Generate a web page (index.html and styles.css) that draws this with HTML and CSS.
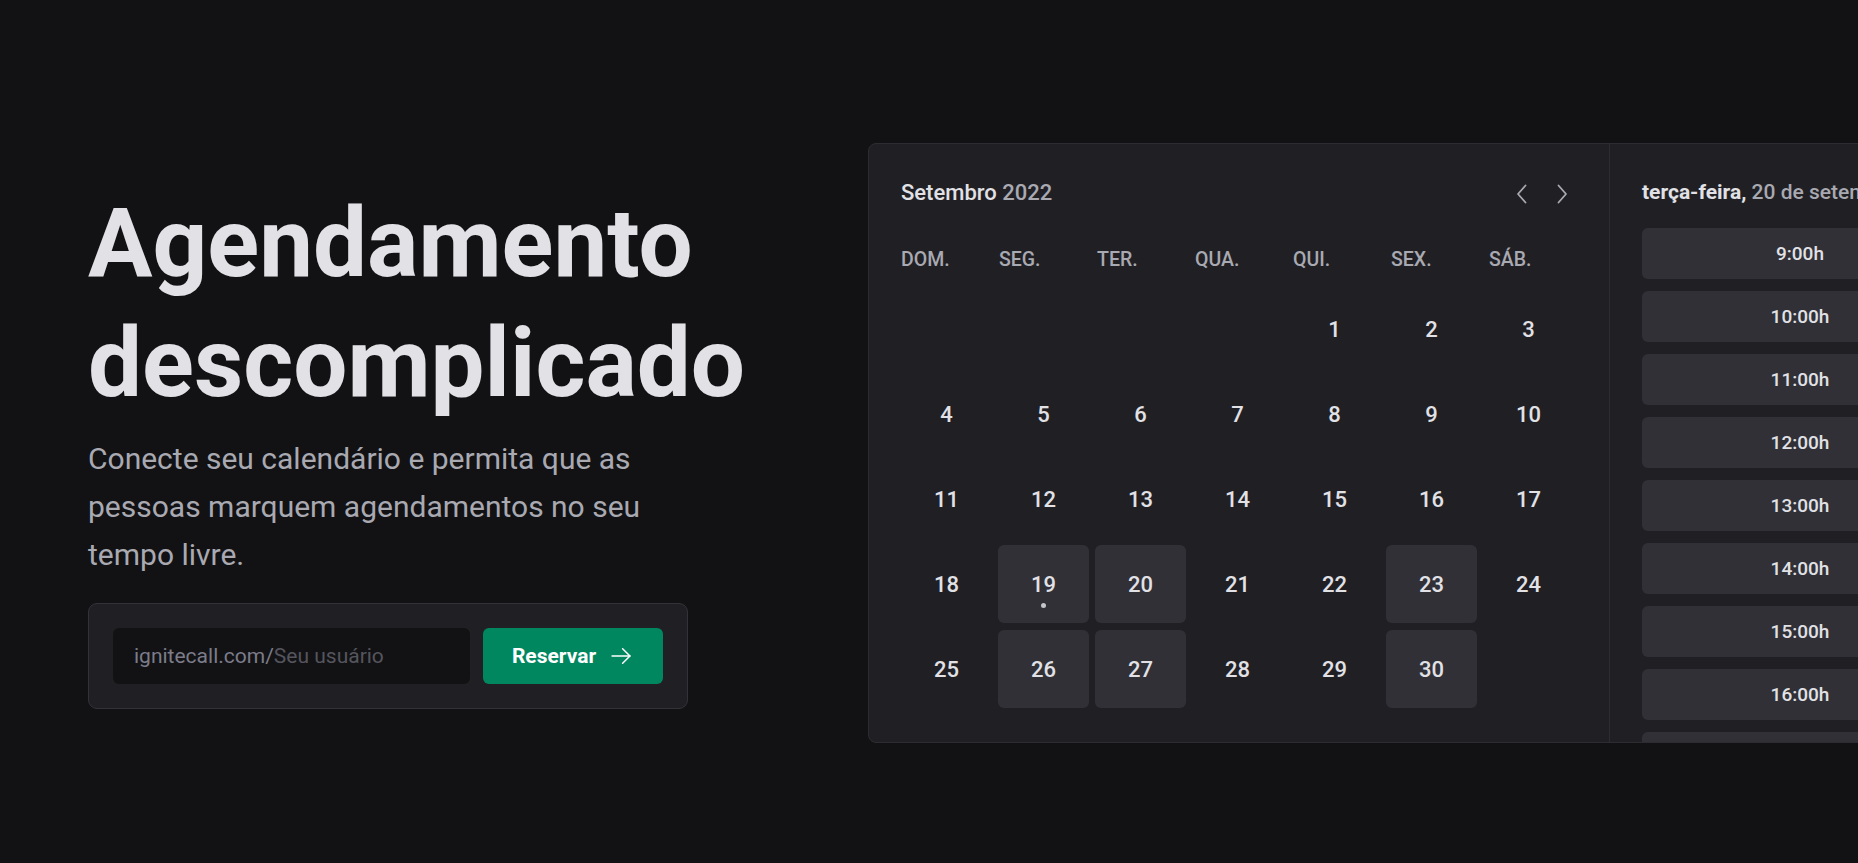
FILE: index.html
```html
<!DOCTYPE html>
<html lang="pt-BR">
<head>
<meta charset="utf-8">
<title>Ignite Call</title>
<link rel="stylesheet" href="styles.css">
</head>
<body>
<main class="page">
  <section class="hero">
    <h1 class="title">Agendamento descomplicado</h1>
    <p class="lead">Conecte seu calendário e permita que as pessoas marquem agendamentos no seu tempo livre.</p>
    <form class="claim">
      <label class="field">
        <span class="prefix">ignitecall.com/</span>
        <input type="text" placeholder="Seu usuário">
      </label>
      <button type="button" class="btn">Reservar
        <svg class="btn-icon" width="26" height="26" viewBox="0 0 256 256" fill="none" stroke="currentColor" stroke-width="15" stroke-linecap="round" stroke-linejoin="round"><line x1="40" y1="128" x2="216" y2="128"/><polyline points="144 56 216 128 144 200"/></svg>
      </button>
    </form>
  </section>

  <div class="preview">
    <div class="cal">
      <div class="cal-head">
        <div class="cal-title">Setembro <span>2022</span></div>
        <div class="cal-nav">
          <svg width="24" height="24" viewBox="0 0 24 24" fill="none" stroke="currentColor" stroke-width="1.8" stroke-linecap="round" stroke-linejoin="round"><polyline points="15.5 3.5 8 12 15.5 20.5"/></svg>
          <svg width="24" height="24" viewBox="0 0 24 24" fill="none" stroke="currentColor" stroke-width="1.8" stroke-linecap="round" stroke-linejoin="round"><polyline points="8.5 3.5 16 12 8.5 20.5"/></svg>
        </div>
      </div>
      <div class="weekdays">
        <span>DOM.</span><span>SEG.</span><span>TER.</span><span>QUA.</span><span>QUI.</span><span>SEX.</span><span>SÁB.</span>
      </div>
      <div class="days">
        <span class="day"></span><span class="day"></span><span class="day"></span><span class="day"></span>
        <span class="day">1</span><span class="day">2</span><span class="day">3</span>
        <span class="day">4</span><span class="day">5</span><span class="day">6</span><span class="day">7</span><span class="day">8</span><span class="day">9</span><span class="day">10</span>
        <span class="day">11</span><span class="day">12</span><span class="day">13</span><span class="day">14</span><span class="day">15</span><span class="day">16</span><span class="day">17</span>
        <span class="day">18</span><span class="day open today">19</span><span class="day open">20</span><span class="day">21</span><span class="day">22</span><span class="day open">23</span><span class="day">24</span>
        <span class="day">25</span><span class="day open">26</span><span class="day open">27</span><span class="day">28</span><span class="day">29</span><span class="day open">30</span><span class="day"></span>
      </div>
    </div>
    <div class="times">
      <div class="times-title">terça-feira, <span>20 de setembro</span></div>
      <div class="slots">
        <div class="slot">9:00h</div>
        <div class="slot">10:00h</div>
        <div class="slot">11:00h</div>
        <div class="slot">12:00h</div>
        <div class="slot">13:00h</div>
        <div class="slot">14:00h</div>
        <div class="slot">15:00h</div>
        <div class="slot">16:00h</div>
        <div class="slot">17:00h</div>
        <div class="slot">18:00h</div>
      </div>
    </div>
  </div>
</main>
</body>
</html>
```

FILE: styles.css
```css
* {
  box-sizing: border-box;
  margin: 0;
  padding: 0;
}

html, body {
  background: #121214;
  overflow: hidden;
}

body {
  font-family: Roboto, "Liberation Sans", sans-serif;
  color: #e1e1e6;
  -webkit-font-smoothing: antialiased;
}

.page {
  display: flex;
  align-items: flex-start;
  gap: 120px;
  width: 1858px;
  height: 863px;
  padding-left: 28px;
  overflow: hidden;
}

/* ---------- hero ---------- */
.hero {
  flex: 0 0 720px;
  min-width: 0;
  padding: 183px 60px 0;
}

.title {
  font-size: 96px;
  line-height: 120px;
  font-weight: 700;
  color: #e1e1e6;
}

.lead {
  margin-top: 12px;
  font-size: 30px;
  line-height: 48px;
  color: #a9a9b2;
}

.claim {
  margin-top: 24px;
  display: grid;
  grid-template-columns: 1fr auto;
  gap: 13px;
  padding: 24px;
  background: #202024;
  border: 1px solid #323238;
  border-radius: 9px;
}

.field {
  display: flex;
  align-items: center;
  min-width: 0;
  height: 56px;
  padding: 0 21px;
  background: #121214;
  border-radius: 6px;
  font-size: 21px;
}

.prefix {
  color: #7c7c8a;
}

.field input {
  flex: 1;
  min-width: 0;
  background: transparent;
  border: 0;
  outline: 0;
  font: inherit;
  color: #e1e1e6;
}

.field input::placeholder {
  color: #55555e;
}

.btn {
  display: flex;
  align-items: center;
  justify-content: center;
  gap: 12px;
  min-width: 180px;
  height: 56px;
  padding: 0 28px;
  background: #00875f;
  color: #ffffff;
  border: 0;
  border-radius: 6px;
  font-family: Roboto, "Liberation Sans", sans-serif;
  font-size: 21px;
  font-weight: 700;
}

.btn-icon {
  display: block;
}

/* ---------- preview ---------- */
.preview {
  flex: 0 0 auto;
  display: flex;
  margin-top: 143px;
  height: 600px;
  background: #202024;
  border: 1px solid #2c2c31;
  border-radius: 8px;
  overflow: hidden;
}

.cal {
  flex: 0 0 741px;
  padding: 34px 0 0 32px;
  border-right: 1px solid #2c2c31;
}

.cal-head {
  display: flex;
  align-items: center;
  justify-content: space-between;
  width: 673px;
  height: 29px;
}

.cal-title {
  font-size: 22px;
  line-height: 29px;
  font-weight: 500;
  color: #e1e1e6;
}

.cal-title span {
  color: #a9a9b2;
}

.cal-nav {
  display: flex;
  gap: 16px;
  color: #a9a9b2;
  margin-top: 3px;
}

.cal-nav svg {
  display: block;
}

.weekdays {
  display: grid;
  grid-template-columns: repeat(7, 92px);
  column-gap: 6px;
  margin-top: 38px;
  font-size: 19.5px;
  line-height: 29px;
  font-weight: 500;
  color: #a9a9b2;
}

.days {
  display: grid;
  grid-template-columns: repeat(7, 91px);
  grid-auto-rows: 78px;
  column-gap: 6px;
  row-gap: 7px;
  margin-top: 16px;
}

.day {
  position: relative;
  display: flex;
  align-items: center;
  justify-content: center;
  font-size: 22px;
  font-weight: 500;
  color: #e1e1e6;
  border-radius: 6px;
}

.day.open {
  background: #303036;
}

.day.today::after {
  content: "";
  position: absolute;
  left: 50%;
  top: 58px;
  width: 5px;
  height: 5px;
  margin-left: -2.5px;
  border-radius: 50%;
  background: #c4c4cc;
}

.times {
  flex: 0 0 380px;
  padding: 34px 32px 0;
}

.times-title {
  font-size: 21px;
  line-height: 29px;
  font-weight: 700;
  color: #e1e1e6;
  white-space: nowrap;
}

.times-title span {
  font-weight: 500;
  color: #a9a9b2;
}

.slots {
  display: flex;
  flex-direction: column;
  gap: 12px;
  margin-top: 21px;
}

.slot {
  display: flex;
  align-items: center;
  justify-content: center;
  height: 51px;
  border-radius: 6px;
  background: #303036;
  font-size: 19px;
  font-weight: 500;
  color: #e1e1e6;
}
```
